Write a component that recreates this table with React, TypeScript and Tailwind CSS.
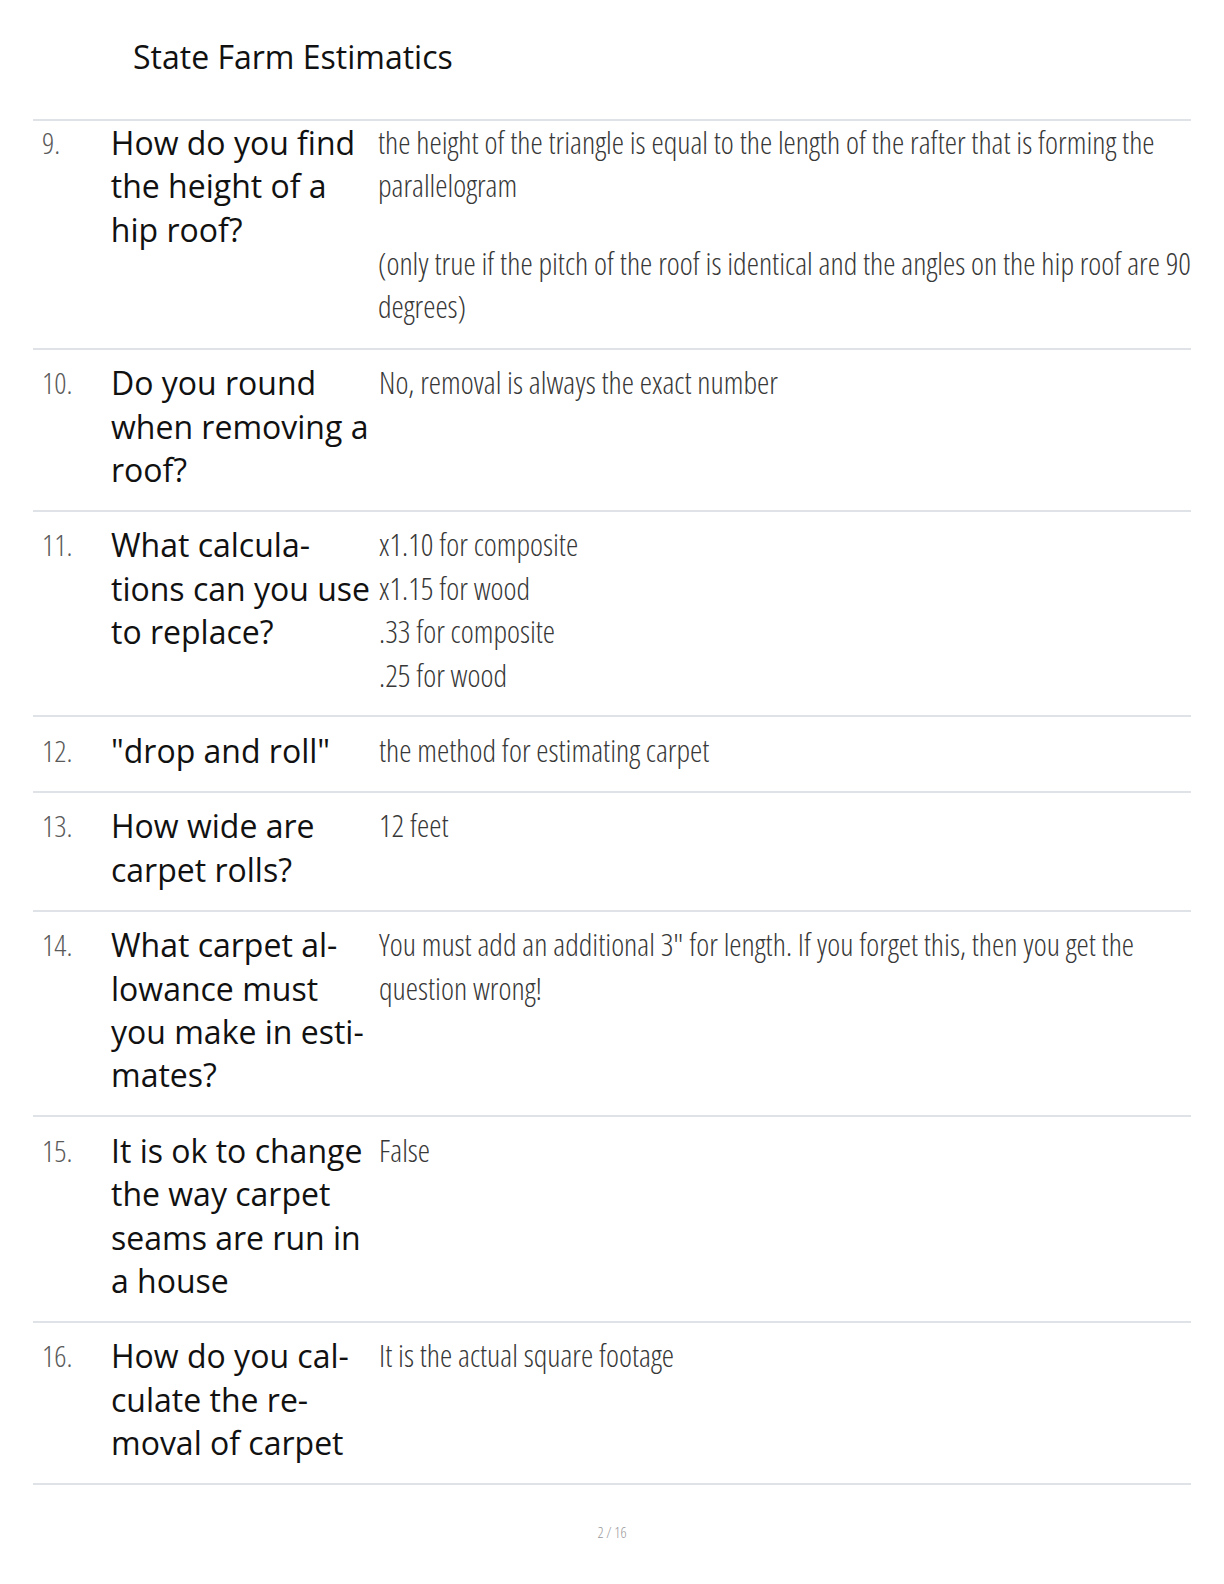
import React from "react";

type Row = { n: string; q: string[]; a: string[][]; first?: boolean };

const rows: Row[] = [
  {
    n: "9.",
    first: true,
    q: ["How do you find", "the height of a", "hip roof?"],
    a: [
      [
        "the height of the triangle is equal to the length of the rafter that is forming the",
        "parallelogram",
      ],
      [
        "(only true if the pitch of the roof is identical and the angles on the hip roof are 90",
        "degrees)",
      ],
    ],
  },
  {
    n: "10.",
    q: ["Do you round", "when removing a", "roof?"],
    a: [["No, removal is always the exact number"]],
  },
  {
    n: "11.",
    q: ["What calcula-", "tions can you use", "to replace?"],
    a: [["x1.10 for composite", "x1.15 for wood", ".33 for composite", ".25 for wood"]],
  },
  {
    n: "12.",
    q: ['"drop and roll"'],
    a: [["the method for estimating carpet"]],
  },
  {
    n: "13.",
    q: ["How wide are", "carpet rolls?"],
    a: [["12 feet"]],
  },
  {
    n: "14.",
    q: ["What carpet al-", "lowance must", "you make in esti-", "mates?"],
    a: [
      [
        'You must add an additional 3" for length. If you forget this, then you get the',
        "question wrong!",
      ],
    ],
  },
  {
    n: "15.",
    q: ["It is ok to change", "the way carpet", "seams are run in", "a house"],
    a: [["False"]],
  },
  {
    n: "16.",
    q: ["How do you cal-", "culate the re-", "moval of carpet"],
    a: [["It is the actual square footage"]],
  },
];

export default function App() {
  return (
    <div className="w-[1224px] min-h-[1584px] bg-white font-['Open_Sans','Noto_Sans',sans-serif]">
      <div className="h-[119px] pl-[133px] pt-[35px]">
        <h1 className="text-[32px] leading-[44px] text-[#111] font-normal">State Farm Estimatics</h1>
      </div>
      <div className="mx-[33px] border-t-2 border-[#dfe2e7]">
        {rows.map((r) => (
          <div
            key={r.n}
            className={
              r.first
                ? "flex border-b-2 border-[#dfe2e7] pt-[0px] pb-[19px]"
                : "flex border-b-2 border-[#dfe2e7] pt-[11.5px] pb-[18.5px]"
            }
          >
            <div className="w-[78px] pl-[9px] text-[30px] leading-[43.4px] text-[#5a5a5a] font-light [font-stretch:62.5%]">
              {r.n}
            </div>
            <div className="w-[268px] text-[32px] leading-[43.4px] text-[#111]">
              {r.q.map((l, i) => (
                <div key={i} className="whitespace-nowrap">{l}</div>
              ))}
            </div>
            <div className="flex-1 flex flex-col gap-[34px] text-[31px] leading-[43.4px] text-[#383838] font-light [font-stretch:62.5%]">
              {r.a.map((p, i) => (
                <div key={i}>
                  {p.map((l, j) => (
                    <div key={j} className="whitespace-nowrap">{l}</div>
                  ))}
                </div>
              ))}
            </div>
          </div>
        ))}
      </div>
      <div className="pt-[37px] text-center text-[15px] leading-[20px] text-[#999] font-light [font-stretch:62.5%]">2 / 16</div>
    </div>
  );
}
